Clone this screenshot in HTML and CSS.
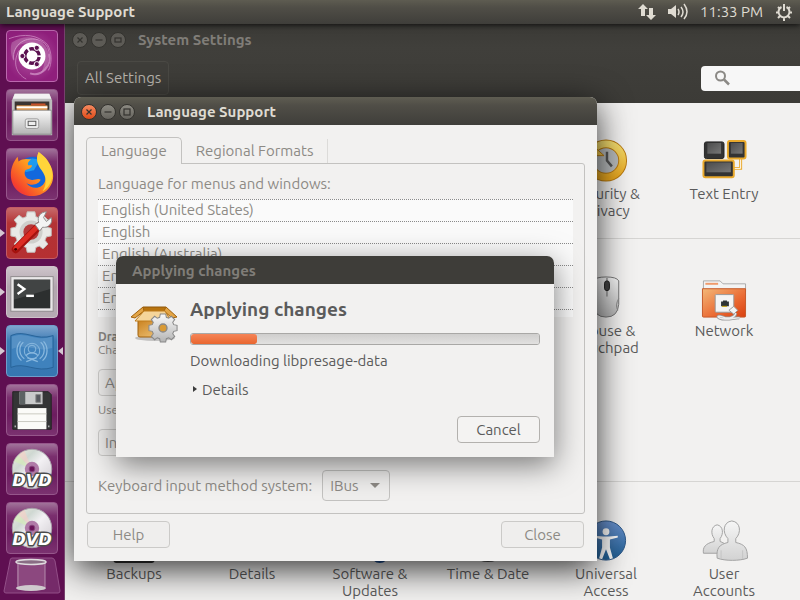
FILE: index.html
```html
<!DOCTYPE html>
<html lang="en">
<head>
<meta charset="utf-8">
<title>Language Support</title>
<link rel="stylesheet" href="styles.css">
</head>
<body>
<svg class="defs" width="0" height="0" aria-hidden="true">
  <defs>
    <linearGradient id="metal" x1="0" y1="0" x2="0" y2="1"><stop offset="0" stop-color="#fafafa"/><stop offset="1" stop-color="#b4b4b4"/></linearGradient>
    <linearGradient id="person" x1="0" y1="0" x2="0" y2="1"><stop offset="0" stop-color="#f6f6f6"/><stop offset="1" stop-color="#d2d2d2"/></linearGradient>
    <linearGradient id="key" x1="0" y1="0" x2="1" y2="1"><stop offset="0" stop-color="#4c4c4c"/><stop offset="1" stop-color="#777"/></linearGradient>
    <linearGradient id="gold" x1="0" y1="0" x2="0" y2="1"><stop offset="0" stop-color="#f6de6e"/><stop offset="1" stop-color="#e9a71f"/></linearGradient>
    <linearGradient id="blue" x1="0" y1="0" x2="0" y2="1"><stop offset="0" stop-color="#6a92cf"/><stop offset="1" stop-color="#1d5c90"/></linearGradient>
    <linearGradient id="folder" x1="0" y1="0" x2="1" y2="1"><stop offset="0" stop-color="#f3b878"/><stop offset=".6" stop-color="#ea6a33"/><stop offset="1" stop-color="#d9400f"/></linearGradient>
    <linearGradient id="fox" x1="1" y1="0" x2="0" y2="1"><stop offset="0" stop-color="#ffe14a"/><stop offset=".45" stop-color="#ff9a1f"/><stop offset=".8" stop-color="#f5432c"/><stop offset="1" stop-color="#e5185e"/></linearGradient>
    <linearGradient id="box" x1="0" y1="0" x2="1" y2="1"><stop offset="0" stop-color="#c77c17"/><stop offset="1" stop-color="#f5d08a"/></linearGradient>
    <linearGradient id="disc" x1="0" y1="0" x2="1" y2="1"><stop offset="0" stop-color="#f4f0e0"/><stop offset=".3" stop-color="#cfd8d2"/><stop offset=".5" stop-color="#f3f1f4"/><stop offset="1" stop-color="#cbc6cc"/></linearGradient>
    <path id="cog" d="M-4-21H4L5-16 8.500-14.500 12.500-17.500 17.500-12.500 14.500-8.500 16-5 21-4V4L16 5 14.500 8.500 17.500 12.500 12.500 17.500 8.500 14.500 5 16 4 21H-4L-5 16-8.500 14.500-12.500 17.500-17.500 12.500-14.500 8.500-16 5-21 4V-4L-16-5-14.500-8.500-17.500-12.500-12.500-17.500-8.500-14.500-5-16z"/>
    <g id="dvd">
      <circle cx="26" cy="26" r="20.500" fill="url(#disc)" stroke="#aaa2ab"/>
      <path d="M26 26L7 18A20 20 0 0 1 12 12z" fill="#d6efb5" opacity=".6"/><path d="M26 26L12 12A20 20 0 0 1 18 7z" fill="#f6cfc4" opacity=".6"/><path d="M26 26L45 32A20 20 0 0 1 40 40z" fill="#fff" opacity=".7"/>
      <circle cx="26" cy="26" r="7.500" fill="#b07ba8"/><circle cx="26" cy="26" r="3" fill="#6a1358" stroke="#8a4b80"/>
      <text class="dvd-mark" x="26" y="44" text-anchor="middle">DVD</text>
    </g>
  </defs>
</svg>

<header class="panel">
  <span class="panel-title">Language Support</span>
  <div class="indicators">
    <svg width="18" height="18" viewBox="0 0 18 18" fill="#dfdbd2"><path d="M5 1l5 5H7v7H3V6H0zM13 17l-5-5h3V5h4v7h3z"/></svg>
    <svg width="20" height="18" viewBox="0 0 20 18"><path d="M0 6h3l5-4v13l-5-4H0z" fill="#dfdbd2"/><path d="M10 6q2 3 0 6M13 4q4 5 0 10M16 1q6 8 0 15" fill="none" stroke="#dfdbd2" stroke-width="1.500"/></svg>
    <time>11:33 PM</time>
    <svg width="18" height="18" viewBox="0 0 18 18" fill="none" stroke="#dfdbd2" stroke-width="2"><path d="M6.500 4A5.500 5.500 0 1 0 11.500 4M9 1v7M1 9.500h3M14 9.500h3M3 4l2 2M15 4l-2 2M3 15l2-2M15 15l-2-2M9 14v4"/></svg>
  </div>
</header>

<div class="desktop">
  <nav class="launcher" aria-label="Launcher">
    <button class="tile dash" aria-label="Search your computer">
      <svg viewBox="0 0 52 52"><g fill="none" stroke="#e7b6df" opacity=".55"><path d="M7 30C5 14 20 4 35 10q10 5 9 18"/><path d="M20 50C8 44 6 30 13 20"/><path d="M44 24c3 12-8 24-20 20" stroke-width="2"/><path d="M2 8c16-6 30-4 40 6 5 8 5 20 1 27"/></g><path d="M5 12C20 2 38 6 43 22c2 10-3 18-8 22C46 26 34 8 14 14 8 18 6 24 7 32 4 25 3 18 5 12z" fill="#fff" opacity=".2"/><circle cx="26" cy="26" r="14" fill="#fff"/><circle cx="26" cy="26" r="7.500" fill="none" stroke="#5b1150" stroke-width="3.500" stroke-dasharray="13.700 2" stroke-dashoffset="-1"/><g fill="#5b1150" stroke="#fff"><circle cx="16" cy="26" r="2.700"/><circle cx="31" cy="17.500" r="2.700"/><circle cx="31" cy="34.500" r="2.700"/></g></svg>
    </button>
    <button class="tile" aria-label="Files">
      <svg viewBox="0 0 52 52"><path d="M8 4h36l3 7v36H5V11z" fill="#bdbdbd"/><path d="M8 4h36l2 5H6z" fill="#f2f2f2"/><path d="M8 12h36v12H8z" fill="#3a3532"/><path d="M10 16h32v8H10z" fill="#e89a4b"/><path d="M25 14h15v2H25z" fill="#c8522a"/><path d="M10 17h32v2H10z" fill="#fff"/><path d="M6 21h40v25H6z" fill="url(#metal)" stroke="#8c8c8c"/><rect x="19" y="30" width="14" height="10" rx="2" fill="#eee" stroke="#999"/><rect x="22" y="32.500" width="8" height="4.500" fill="#eee" stroke="#555"/></svg>
    </button>
    <button class="tile" aria-label="Firefox">
      <svg viewBox="0 0 52 52"><circle cx="27" cy="25" r="17" fill="#1268dd"/><path d="M12 20c4-9 14-13 22-8l-6 10-8 2z" fill="#20a7f5" opacity=".8"/><path d="M33 3c3 3 8 7 10 12 3 2 5 8 5 13 0 12-10 21-22 21C14 49 4 40 4 27 4 19 7 13 11 8l1 5c4-3 8-3 13-2-3 2-4 4-3 6h4c0 3-4 4-7 5-2 5 1 9 6 10 3 1 7-2 10 0-2 5-10 7-15 3 5 8 18 7 20-3 1-5-1-8-4-12-5-5-6-11-3-17z" fill="url(#fox)"/><path d="M33 3c7 5 14 12 14 24 0 8-5 14-10 17 5-8 4-15-1-22-5-6-6-13-3-19z" fill="#ffd43a"/></svg>
    </button>
    <button class="tile red running" aria-label="System Settings">
      <svg viewBox="0 0 52 52"><use href="#cog" x="25" y="25" fill="#e9e9e7" stroke="#c5c5c2"/><circle cx="25" cy="25" r="12" fill="#cfcfcc"/><circle cx="25" cy="25" r="8" fill="#b5393a"/><path d="M9 43L33 19" stroke="#a5120e" stroke-width="8" stroke-linecap="round"/><path d="M9 42L32 19" stroke="#dc2c23" stroke-width="5" stroke-linecap="round"/><path d="M29 17l4-2c-2-6 2-11 8-11l-3 6 3 4 5-4c2 6-3 11-9 10l-3 4z" fill="#f4f4f4" stroke="#8d8d8d"/><circle cx="9" cy="43" r="1.500" fill="#400"/></svg>
    </button>
    <button class="tile grey running" aria-label="Terminal">
      <svg viewBox="0 0 52 52"><rect x="4" y="10" width="44" height="36" fill="#e9e7e8" stroke="#8e898c"/><rect x="7" y="13" width="38" height="30" fill="#2c2f2f"/><path d="M7 13h38v10L7 34z" fill="#fff" opacity=".1"/><path d="M11 18l7 5-7 5" fill="none" stroke="#fff" stroke-width="2.500"/><path d="M20 30h8" stroke="#fff" stroke-width="2.500"/></svg>
    </button>
    <button class="tile azure running focused" aria-label="Language Support">
      <svg viewBox="0 0 52 52"><path d="M4 10c15-7 26 6 44 0v33c-18 6-29-6-44 0z" fill="#3f82bd" stroke="#286398"/><path d="M5 11c15-6 25 6 42 0v12C30 28 20 17 5 24z" fill="#fff" opacity=".12"/><g fill="none" stroke="#8ab9df"><circle cx="26" cy="26" r="8"/><circle cx="26" cy="24" r="4"/><path d="M18 34c-6-4-6-13-1-17M34 34c6-4 6-13 1-17M15 36c-6-5-6-15-1-20M37 36c6-5 6-15 1-20M20 37l11-4M32 37l-11-4M20 31c2-4 10-4 12 0" stroke-width="1.300"/></g></svg>
    </button>
    <button class="tile" aria-label="Floppy Disk">
      <svg viewBox="0 0 52 52"><path d="M6 7h37l3 3v36H6z" fill="#343536" stroke="#222"/><path d="M13 7h24v13H13z" fill="#c9cacb"/><path d="M13 7h6v13h-6z" fill="#5d6364"/><path d="M30 10h5v8h-5z" fill="#56585e" stroke="#888"/><path d="M11 24h30v22H11z" fill="#fbfbf8"/><path d="M11 30h30M11 38h30" stroke="#c9c9c0"/><path d="M8 43h1M43 43h1" stroke="#eee" stroke-width="2"/></svg>
    </button>
    <button class="tile" aria-label="DVD 1"><svg viewBox="0 0 52 52"><use href="#dvd"/></svg></button>
    <button class="tile" aria-label="DVD 2"><svg viewBox="0 0 52 52"><use href="#dvd"/></svg></button>
    <button class="trash" aria-label="Trash">
      <svg viewBox="0 0 58 38"><path d="M9 1h40q2 0 3 3l5 30q0 2-2 2H3q-2 0-2-2L7 4q0-3 2-3z" fill="#752a69" stroke="#934f88"/><path d="M14 4h28v28H14z" fill="#955689" opacity=".7"/><path d="M15 6v24M42 6v24" stroke="#b48bad"/><ellipse cx="28" cy="31" rx="15" ry="3" fill="#cfc9cd"/><ellipse cx="28" cy="5" rx="15" ry="2.500" fill="#8a6d85" stroke="#e0dcdf" stroke-width="1.500"/></svg>
    </button>
  </nav>

  <main class="workspace">
    <section class="settings" aria-label="System Settings">
      <header class="settings-head">
        <div class="titlebar inactive">
          <button class="wm" aria-label="Close window"><svg viewBox="0 0 14 14"><path d="M4.500 4.500l5 5M9.500 4.500l-5 5"/></svg></button>
          <button class="wm" aria-label="Minimize window"><svg viewBox="0 0 14 14"><path d="M3.500 7h7"/></svg></button>
          <button class="wm" aria-label="Maximize window"><svg viewBox="0 0 14 14"><rect x="4" y="5" width="6" height="4"/></svg></button>
          <h2>System Settings</h2>
        </div>
        <div class="toolbar">
          <button class="all">All Settings</button>
          <label class="search"><svg width="16" height="16" viewBox="0 0 16 16" fill="none" stroke="#8b8985" stroke-width="2"><circle cx="6.500" cy="6" r="4.500"/><path d="M10 9.500l5 5" stroke-width="2.500"/></svg><input type="search" aria-label="Search settings"></label>
        </div>
      </header>
      <div class="group personal">
        <a href="#" class="item col5"><svg viewBox="0 0 48 48"><circle cx="24" cy="23" r="16" fill="#b9bcbd"/><circle cx="24" cy="23" r="17" fill="none" stroke="#b97a10" stroke-width="9"/><circle cx="24" cy="23" r="17" fill="none" stroke="url(#gold)" stroke-width="7"/><path d="M12 9l10 9H9z" fill="#f2c84a" stroke="#b97a10"/><path d="M25 14v9l5 6" fill="none" stroke="#555" stroke-width="2.500"/></svg>Security &amp; Privacy</a>
        <a href="#" class="item col6"><svg viewBox="0 0 48 48"><path d="M41 20v11h-8" fill="none" stroke="#e9a92c" stroke-width="3"/><path d="M41 20v11h-8" fill="none" stroke="#fff"/><rect x="4" y="4" width="20" height="17" rx="2" fill="#333" stroke="#222"/><rect x="7" y="5" width="14" height="11" fill="url(#key)"/><rect x="28" y="3" width="18" height="18" rx="2" fill="#333" stroke="#e9a92c" stroke-width="2"/><rect x="31" y="5" width="12" height="11" fill="url(#key)"/><rect x="3" y="23" width="31" height="17" rx="2" fill="#333" stroke="#e9a92c" stroke-width="2"/><rect x="6" y="25" width="25" height="10" fill="url(#key)"/></svg>Text Entry</a>
      </div>
      <div class="group hardware">
        <a href="#" class="item col5"><svg viewBox="0 0 48 48"><path d="M12 6q1-4 12-4t13 4v24q-1 13-13 13T11 30z" fill="url(#metal)" stroke="#777"/><path d="M25 3v19" stroke="#666"/><rect x="22.500" y="6" width="5" height="10" rx="2.500" fill="#444" stroke="#222"/><path d="M37 24q-4 7-1 12" fill="none" stroke="#888"/></svg>Mouse &amp; Touchpad</a>
        <a href="#" class="item col6"><svg viewBox="0 0 48 48"><path d="M3 15V6h17l3 3h23v8H3z" fill="#f3f3f3" stroke="#aaa"/><path d="M5 8h13v2H5z" fill="#ef9a6b"/><path d="M2 14h44v28q0 1-1 1H3q-1 0-1-1z" fill="url(#folder)" stroke="#c6592a"/><rect x="15" y="20" width="19" height="18" rx="1" fill="#f4f4f4" stroke="#999"/><path d="M21 30v-3h2v-1h4v1h2v5h-8z" fill="#2e3436"/><path d="M22 32h5" stroke="#c4a000"/><path d="M29 36l5-4 4 4-4 4z" fill="#f4f4f4" stroke="#999"/><path d="M36 39c-1 5-8 6-13 4-8-3-6 2 2 2s13-2 15-1" fill="none" stroke="#999" stroke-width="3"/><path d="M36 39c-1 5-8 6-13 4-8-3-6 2 2 2s13-2 15-1" fill="none" stroke="#eee" stroke-width="1.500"/></svg>Network</a>
      </div>
      <div class="group system">
        <a href="#" class="item"><svg viewBox="0 0 48 48"><rect x="3" y="10" width="42" height="36" rx="3" fill="#333"/></svg>Backups</a>
        <a href="#" class="item"><svg viewBox="0 0 48 48"><rect x="6" y="4" width="36" height="36" rx="4" fill="#777"/></svg>Details</a>
        <a href="#" class="item"><svg viewBox="0 0 48 48"><circle cx="34" cy="37" r="9" fill="#1d4f94"/></svg>Software &amp; Updates</a>
        <a href="#" class="item"><svg viewBox="0 0 48 48"><circle cx="24" cy="23" r="22" fill="#555"/></svg>Time &amp; Date</a>
        <a href="#" class="item"><svg viewBox="0 0 48 48"><circle cx="24" cy="23" r="20" fill="url(#blue)" stroke="#2b5686"/><circle cx="24" cy="14" r="3.500" fill="#fff"/><path d="M12 18l9 1h6l9-1v2l-8 2v8l3 11-3 1-4-10-4 10-3-1 3-11v-8l-8-2z" fill="#fff"/></svg>Universal Access</a>
        <a href="#" class="item"><svg viewBox="0 0 48 48" stroke="#a2a2a2" fill="url(#person)"><path d="M14 21c-4-5-3-13 3-14 6 1 7 9 3 14v3c6 2 8 5 8 12H3c-1-6 2-10 11-12z"/><path d="M28 21c-6-6-5-17 4-18 9 1 10 12 4 18v4c9 2 12 5 12 16-8 3-23 3-31 0-1-10 2-14 11-16z"/><path d="M21 33v9M43 33v9" stroke="#c4c4c4"/></svg>User Accounts</a>
      </div>
    </section>

    <section class="window language" aria-label="Language Support">
      <header class="titlebar">
        <button class="wm close" aria-label="Close window"><svg viewBox="0 0 14 14"><path d="M4.500 4.500l5 5M9.500 4.500l-5 5"/></svg></button>
        <button class="wm" aria-label="Minimize window"><svg viewBox="0 0 14 14"><path d="M3.500 7h7"/></svg></button>
        <button class="wm" aria-label="Maximize window"><svg viewBox="0 0 14 14"><rect x="4" y="4" width="6" height="6"/></svg></button>
        <h1>Language Support</h1>
      </header>
      <div class="window-body">
        <div class="tabs" role="tablist">
          <button role="tab" class="tab active" aria-selected="true">Language</button>
          <button role="tab" class="tab" aria-selected="false">Regional Formats</button>
        </div>
        <div class="page" role="tabpanel">
          <p class="caption">Language for menus and windows:</p>
          <ul class="languages">
            <li>English (United States)</li>
            <li>English</li>
            <li>English (Australia)</li>
            <li>English (Canada)</li>
            <li>English (UK)</li>
          </ul>
          <p class="hint"><b>Drag languages to arrange them in order of preference.</b><br>Changes take effect next time you log in.</p>
          <button class="btn left" disabled>Apply System-Wide</button>
          <p class="hint single">Use the same language choices for startup and login.</p>
          <button class="btn left" disabled>Install / Remove Languages...</button>
          <div class="method">
            <label for="ime">Keyboard input method system:</label>
            <span class="combo"><select id="ime" disabled><option>IBus</option></select><svg width="10" height="6" viewBox="0 0 10 6"><path d="M0 0h10L5 5z" fill="#8d8a85"/></svg></span>
          </div>
        </div>
        <footer class="actions">
          <button class="btn" disabled>Help</button>
          <button class="btn" disabled>Close</button>
        </footer>
      </div>
    </section>

    <section class="window progress-dialog" role="dialog" aria-labelledby="applying">
      <header class="titlebar inactive"><h2>Applying changes</h2></header>
      <div class="dialog-body">
        <svg class="package" width="48" height="48" viewBox="0 0 48 48"><ellipse cx="25" cy="36" rx="20" ry="3" fill="#000" opacity=".2"/><path d="M8 16h31v17q0 2-2 2H10q-2 0-2-2z" fill="url(#box)" stroke="#a0610c"/><path d="M13 5h23l4 7H8z" fill="#b8740f" stroke="#8f560a"/><path d="M13 5L1 15l4 1 9-7z" fill="#e3a546" stroke="#a0610c"/><path d="M36 5l11 10-5 1-8-7z" fill="#e3a546" stroke="#a0610c"/><path d="M14 9h21l6 10H5z" fill="#f5d59a" stroke="#bf7d1c"/><g transform="translate(33 26) scale(.67)"><use href="#cog" fill="url(#metal)" stroke="#888" stroke-width="1.500"/><circle r="6" fill="#d99a35" stroke="#888" stroke-width="2"/></g></svg>
        <div class="status">
          <h3 id="applying">Applying changes</h3>
          <progress value="19" max="100" aria-label="Progress"></progress>
          <p>Downloading libpresage-data</p>
          <details><summary><svg width="4" height="8" viewBox="0 0 4 8"><path d="M0 0l4 3-4 3z" fill="#3c3c3c"/></svg>Details</summary></details>
          <button class="btn cancel">Cancel</button>
        </div>
      </div>
    </section>
  </main>
</div>
</body>
</html>
```
FILE: styles.css
```css
* { box-sizing: border-box; }

body {
  margin: 0;
  height: 100vh;
  display: flex;
  flex-direction: column;
  overflow: hidden;
  font: 15px/18px Ubuntu, "Noto Sans", sans-serif;
  color: #4c4c4c;
  background: #f2f1f0;
}

h1, h2, h3, p, ul { margin: 0; padding: 0; }
button, select, input { font: inherit; color: inherit; margin: 0; }
svg { display: block; flex: none; }
.defs { position: absolute; }

/* Top panel */
.panel {
  position: relative;
  z-index: 3;
  flex: none;
  display: flex;
  align-items: center;
  justify-content: space-between;
  height: 24px;
  padding: 0 7px 0 6px;
  color: #dfdbd2;
  background: linear-gradient(#5e5c51, #504e47 30%, #3f3e3a);
  box-shadow: 0 1px 6px rgba(0, 0, 0, .8);
}
.panel-title { font-weight: bold; }
.indicators { display: flex; align-items: center; gap: 12px; }

.desktop { flex: 1; display: flex; min-height: 0; }

/* Launcher */
.launcher {
  position: relative;
  z-index: 1;
  flex: none;
  width: 65px;
  display: flex;
  flex-direction: column;
  gap: 7px;
  padding: 6px 6px 0;
  background: #5f0f51;
  border-right: 1px solid #77406d;
}
.tile {
  position: relative;
  flex: none;
  width: 52px;
  height: 52px;
  padding: 0;
  border: 1px solid #96568b;
  border-radius: 4px;
  background: linear-gradient(#a1739a, #7a2f6e 25%, #6c1c5f 60%, #7b3270);
}
.tile svg { width: 50px; height: 50px; }
.dvd-mark {
  font: italic bold 17px "DejaVu Sans", sans-serif;
  fill: #fff;
  stroke: #4b4b4b;
  stroke-width: 3px;
  stroke-linejoin: round;
  paint-order: stroke;
}
.dash { background: radial-gradient(circle, #b153a0, #8f1f7c 75%); border-color: #bb68ae; }
.red { background: linear-gradient(#c66a6b, #b43335 30%, #b53032); border-color: #c25b65; }
.grey { background: linear-gradient(#cdc4ca, #b2a6af 40%, #b6abb3); border-color: #cfc2cb; }
.azure { background: linear-gradient(#7fa6ce, #3f7cb5 30%, #3676b1); border-color: #6f9dcb; }
.running::before, .focused::after {
  content: "";
  position: absolute;
  top: 21px;
  border: 4px solid transparent;
}
.running::before { left: -7px; border-left: 5px solid #d5c7d2; border-right: 0; }
.focused::after { right: -6px; border-right: 5px solid #d5c7d2; border-left: 0; }
.trash { flex: none; width: 58px; height: 38px; margin: -4px 0 0 -3px; padding: 0; border: 0; background: none; }

/* Window frames */
.workspace { position: relative; flex: 1; min-width: 0; overflow: hidden; }
.titlebar {
  display: flex;
  align-items: center;
  gap: 3px;
  height: 28px;
  padding: 1px 7px 0;
  color: #dfdbd2;
  background: linear-gradient(#5f5d52, #504e47 30%, #3f3e3a);
  border-radius: 7px 7px 0 0;
}
.titlebar h1, .titlebar h2 { margin-left: 9px; font-size: 15px; font-weight: bold; }
.titlebar.inactive { color: #807d78; background: #3e3d39; }
.wm {
  width: 16px;
  height: 16px;
  padding: 0;
  border: 1px solid #34332f;
  border-radius: 50%;
  background: linear-gradient(#8c8a82, #66645e);
}
.wm svg { width: 14px; height: 14px; fill: none; stroke: #34332f; stroke-width: 1.200; }
.wm.close { background: linear-gradient(#f58a60, #de4a18); }
.inactive .wm { background: #5d5b56; }

/* System Settings */
.settings-head { background: linear-gradient(#3b3a36, #403f3b 30%, #3c3b37); height: 79px; }
.settings-head .titlebar { height: 30px; background: none; }
.toolbar { display: flex; align-items: center; justify-content: space-between; padding: 7px 0 0 12px; }
.all {
  height: 34px;
  padding: 0 7px;
  color: #b9b5ae;
  background: #3f3e3a;
  border: 1px solid #4a4944;
  border-radius: 4px;
}
.search {
  display: flex;
  align-items: center;
  width: 99px;
  height: 25px;
  padding-left: 13px;
  background: #f7f7f7;
  border-radius: 4px 0 0 4px;
}
.search input { width: 60px; border: 0; background: none; outline: 0; }
.group {
  display: grid;
  grid-template-columns: repeat(6, 118px);
  grid-auto-rows: 82px;
  row-gap: 24px;
  padding: 36px 10px 18px;
  border-top: 1px solid #d6d5d3;
}
.personal { padding-top: 35px; border-top: 0; }
.hardware { grid-template-rows: repeat(2, 82px); }
.system { padding-bottom: 0; border-bottom: 1px solid #d6d5d3; }
.personal, .system { grid-auto-rows: 82px; }
.item {
  display: flex;
  flex-direction: column;
  align-items: center;
  padding: 0 16px;
  line-height: 17px;
  text-align: center;
  text-decoration: none;
  color: #5b5b5b;
}
.item svg { width: 48px; height: 47px; }
.col5 { grid-column: 5; }
.col6 { grid-column: 6; }

/* Floating windows */
.window { position: absolute; background: #f2f1f0; border-radius: 7px 7px 0 0; }
.language {
  left: 9px;
  top: 73px;
  width: 523px;
  color: #8d8a85;
  box-shadow: 0 8px 34px rgba(0, 0, 0, .8);
}
.window-body { padding: 12px 12px 13px; }
.tabs { display: flex; align-items: flex-end; }
.tab { height: 24px; padding: 0 14px; border: 0; border-right: 1px solid #dcdbd9; background: none; }
.tab.active {
  position: relative;
  z-index: 1;
  height: 27px;
  margin-bottom: -1px;
  border: 1px solid #c3c2c0;
  border-bottom: 0;
  border-radius: 5px 5px 0 0;
  background: #f2f1f0;
}
.page { padding: 11px 11px 12px; border: 1px solid #c3c2c0; border-radius: 0 3px 3px 3px; }
.languages { margin: 6px 0 13px; padding-bottom: 7px; list-style: none; background: #fafafa; border-top: 1px dotted #8a8a8a; }
.languages li { height: 22px; padding: 1px 4px; border-bottom: 1px dotted #8a8a8a; }
.hint { font-size: 12px; line-height: 13px; }
.hint.single { margin: 7px 0 13px; }
.btn {
  display: block;
  height: 27px;
  min-width: 83px;
  padding: 0 6px;
  border: 1px solid #b3b1ae;
  border-radius: 4px;
  background: #f4f3f2;
}
.btn:disabled { color: #8d8a85; border-color: #cbcac8; background: #efeeed; }
.btn.left { margin-top: 13px; }
.method { display: flex; align-items: center; gap: 10px; margin-top: 14px; }
.combo { position: relative; }
.combo select {
  appearance: none;
  display: block;
  width: 68px;
  height: 31px;
  padding: 0 7px;
  opacity: 1;
  color: #8d8a85;
  border: 1px solid #c3c2c0;
  border-radius: 4px;
  background: #efeeed;
}
.combo svg { position: absolute; right: 10px; top: 13px; }
.actions { display: flex; justify-content: space-between; margin: 7px 1px 0; }

/* Progress dialog */
.progress-dialog {
  left: 51px;
  top: 232px;
  width: 438px;
  box-shadow: 0 8px 30px rgba(0, 0, 0, .5);
}
.dialog-body { display: flex; gap: 12px; padding: 14px 14px; }
.package { margin-top: 4px; }
.status { flex: 1; min-width: 0; color: #5b5b5b; }
.status h3 { font-size: 19px; line-height: 22px; }
progress {
  appearance: none;
  display: block;
  width: 100%;
  height: 12px;
  margin: 13px 0 7px;
  border: 1px solid #a9a8a6;
  border-radius: 3px;
  overflow: hidden;
  background: linear-gradient(#cfcecd, #e2e1e0);
}
progress::-webkit-progress-bar { background: linear-gradient(#cfcecd, #e2e1e0); }
progress::-webkit-progress-value { background: linear-gradient(#f58457, #e9662f); border-radius: 3px; }
details { margin-top: 11px; }
summary { display: flex; align-items: center; gap: 5px; padding-left: 3px; list-style: none; }
.cancel { margin: 17px 0 0 auto; }
```
